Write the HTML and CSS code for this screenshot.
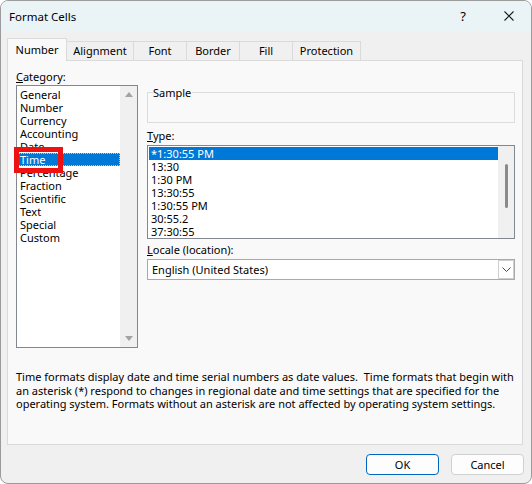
FILE: index.html
```html
<html>
<head>
    <title>Format Cells</title>
    <link rel="stylesheet" href="styles.css">
</head>
<body>
    <div class="window">
        <div class="titlebar">
            <span class="title">Format Cells</span>
            <span class="help">?</span>
            <span class="close">
                <svg width="10" height="10" viewBox="0 0 10 10"><path d="M0.5 0.5L9.5 9.5M9.5 0.5L0.5 9.5" stroke="#1b1b1b" stroke-width="1.1" fill="none"/></svg>
            </span>
        </div>

        <div class="content">
            <div class="tabs">
                <div class="tab active tab-number">Number</div>
                <div class="tab tab-alignment">Alignment</div>
                <div class="tab tab-small">Font</div>
                <div class="tab tab-small">Border</div>
                <div class="tab tab-small">Fill</div>
                <div class="tab tab-protection">Protection</div>
            </div>

            <div class="panel">
                <div class="top-row">
                    <div class="category">
                        <div class="label"><u>C</u>ategory:</div>
                        <div class="listbox cat-list">
                            <div class="items">
                                <div class="item">General</div>
                                <div class="item">Number</div>
                                <div class="item">Currency</div>
                                <div class="item">Accounting</div>
                                <div class="item">Date</div>
                                <div class="item selected focused">Time</div>
                                <div class="item">Percentage</div>
                                <div class="item">Fraction</div>
                                <div class="item">Scientific</div>
                                <div class="item">Text</div>
                                <div class="item">Special</div>
                                <div class="item">Custom</div>
                            </div>
                            <div class="vscroll arrows">
                                <svg width="8" height="5" viewBox="0 0 8 5"><path d="M0 5L4 0L8 5Z" fill="#a3a3a3"/></svg>
                                <svg width="8" height="5" viewBox="0 0 8 5"><path d="M0 0L8 0L4 5Z" fill="#a3a3a3"/></svg>
                            </div>
                        </div>
                    </div>

                    <div class="format-side">
                        <div class="sample"><span class="sample-label">Sample</span></div>

                        <div class="label type-label"><u>T</u>ype:</div>
                        <div class="listbox type-list">
                            <div class="items">
                                <div class="item selected">*1:30:55 PM</div>
                                <div class="item">13:30</div>
                                <div class="item">1:30 PM</div>
                                <div class="item">13:30:55</div>
                                <div class="item">1:30:55 PM</div>
                                <div class="item">30:55.2</div>
                                <div class="item">37:30:55</div>
                            </div>
                            <div class="vscroll">
                                <div class="thumb"></div>
                            </div>
                        </div>

                        <div class="label locale-label"><u>L</u>ocale (location):</div>
                        <div class="combo">
                            <span class="combo-text">English (United States)</span>
                            <span class="combo-btn">
                                <svg width="9" height="5" viewBox="0 0 9 5"><path d="M0.5 0.5L4.5 4.5L8.5 0.5" stroke="#4a4a4a" stroke-width="1" fill="none"/></svg>
                            </span>
                        </div>
                    </div>
                </div>

                <p class="desc">Time formats display date and time serial numbers as date values.&nbsp; Time formats that begin with<br>an asterisk (*) respond to changes in regional date and time settings that are specified for the<br>operating system. Formats without an asterisk are not affected by operating system settings.</p>
            </div>

            <div class="buttons">
                <button class="btn btn-ok">OK</button>
                <button class="btn">Cancel</button>
            </div>
        </div>

        <!-- red highlight drawn over the selected category -->
        <div class="marker"></div>
    </div>
</body>
</html>
```

FILE: styles.css
```css
body {
    margin: 0;
    background: #ffffff;
    font-family: "Noto Sans", sans-serif;
    font-size: 11px;
    color: #000;
}

.window {
    position: relative;
    width: 532px;
    height: 484px;
    box-sizing: border-box;
    border: 1px solid #9b9b9b;
    border-radius: 8px;
    overflow: hidden;
    background: #f0f0f0;
    display: flex;
    flex-direction: column;
}

.titlebar {
    flex: none;
    height: 30px;
    background: #eaf4f7;
    display: flex;
    align-items: center;
    padding-left: 8px;
}

.title {
    flex: 1;
    font-size: 11.5px;
}

.help {
    width: 14px;
    text-align: center;
    font-size: 13px;
    margin-right: 34px;
}

.close {
    width: 10px;
    height: 10px;
    margin-right: 17px;
    display: flex;
}

.content {
    padding: 7px 8px 0 6px;
}

.tabs {
    display: flex;
    align-items: flex-end;
    height: 22px;
}

.tab {
    box-sizing: border-box;
    height: 19px;
    line-height: 18px;
    text-align: center;
    background: #f0f0f0;
    border-top: 1px solid #dadada;
    border-right: 1px solid #dadada;
}

.tab.active {
    position: relative;
    z-index: 1;
    height: 23px;
    line-height: 22px;
    margin-bottom: -1px;
    background: #f9f9f9;
    border-left: 1px solid #dadada;
}

.tab-number { width: 60px; }
.tab-alignment { width: 67px; }
.tab-small { width: 53px; }
.tab-protection { width: 68px; }

.panel {
    height: 385px;
    box-sizing: border-box;
    border: 1px solid #dadada;
    background: #f9f9f9;
    padding: 9px 6px 0 8px;
}

.top-row {
    display: flex;
    gap: 9px;
}

.category {
    width: 122px;
}

.format-side {
    width: 368px;
}

.label {
    height: 13px;
    line-height: 13px;
}

.listbox {
    display: flex;
    box-sizing: border-box;
    border: 1px solid #828790;
    background: #fff;
}

.cat-list {
    margin-top: 2px;
    height: 263px;
}

.items {
    flex: 1;
    padding-top: 2px;
}

.item {
    height: 13px;
    line-height: 13px;
    margin-left: 1px;
    padding-left: 2px;
    white-space: nowrap;
}

.item.selected {
    background: #0078d7;
    color: #fff;
}

.item.focused {
    outline: 1px dotted #f3c27d;
    outline-offset: -1px;
}

.vscroll {
    width: 17px;
    background: #f0f0f0;
    display: flex;
    flex-direction: column;
    align-items: center;
}

.vscroll.arrows {
    justify-content: space-between;
    padding: 6px 0;
    box-sizing: border-box;
}

.sample {
    margin-top: 22px;
    height: 31px;
    box-sizing: border-box;
    border: 1px solid #dcdcdc;
    padding: 0 5px;
}

.sample-label {
    display: inline-block;
    vertical-align: top;
    margin-top: -7px;
    padding: 0 1px 0 0;
    line-height: 13px;
    background: #f9f9f9;
}

.type-label {
    margin-top: 6px;
}

.type-list {
    margin-top: 3px;
    height: 94px;
}

.type-list .items {
    padding-top: 1px;
}

.type-list .vscroll {
    width: 16px;
}

.thumb {
    margin-top: 18px;
    width: 3px;
    height: 44px;
    border-radius: 2px;
    background: #8a8a8a;
}

.locale-label {
    margin-top: 4px;
}

.combo {
    margin-top: 3px;
    height: 21px;
    box-sizing: border-box;
    border: 1px solid #a9a9a9;
    background: #fff;
    display: flex;
    align-items: center;
}

.combo-text {
    flex: 1;
    padding-left: 4px;
}

.combo-btn {
    width: 16px;
    height: 19px;
    box-sizing: border-box;
    border: 1px solid #cfcfcf;
    display: flex;
    align-items: center;
    justify-content: center;
}

.desc {
    margin: 22px 0 0;
    line-height: 13.5px;
    white-space: nowrap;
}

.buttons {
    display: flex;
    justify-content: flex-end;
    gap: 12px;
    margin-top: 9px;
    margin-right: -1px;
}

.btn {
    width: 73px;
    height: 21px;
    padding: 0;
    border: 1px solid #d0d0d0;
    border-radius: 4px;
    background: #fdfdfd;
    font-family: inherit;
    font-size: 11px;
    color: #000;
}

.btn-ok {
    border-color: #0067c0;
}

.marker {
    position: absolute;
    left: 13px;
    top: 146px;
    width: 49px;
    height: 26px;
    box-sizing: border-box;
    border: 5px solid #ee1111;
}
```
